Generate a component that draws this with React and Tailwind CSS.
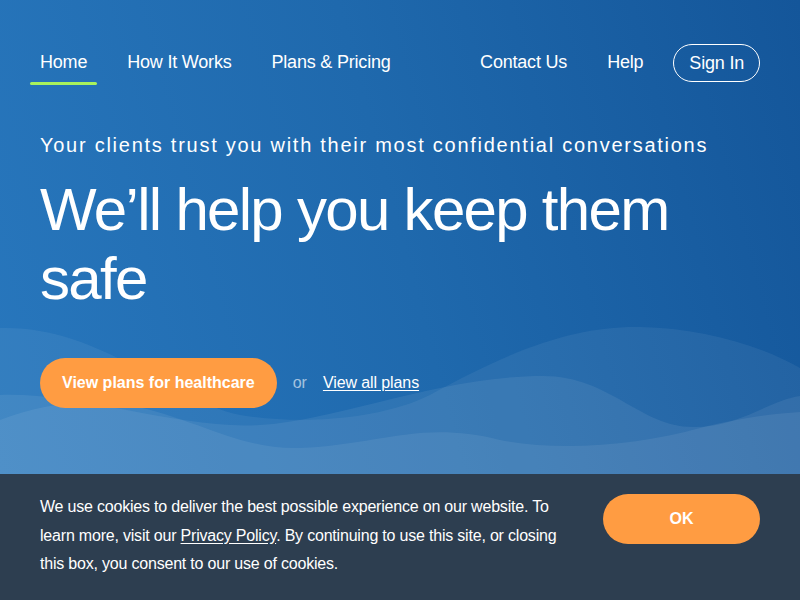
import React from 'react';

const navLeft = ['Home', 'How It Works', 'Plans & Pricing'];
const navRight = ['Contact Us', 'Help'];

const Waves = () => (
    <svg
        className="absolute inset-0 w-full h-full pointer-events-none"
        viewBox="0 0 800 474"
        preserveAspectRatio="none"
    >
        <path
            d="M0,328 C100,325 170,400 240,415 C300,425 380,420 430,395 C520,345 580,326 640,327 C700,328 760,345 800,368 L800,474 L0,474 Z"
            fill="#ffffff"
            fillOpacity="0.06"
        />
        <path
            d="M0,395 C80,392 180,430 260,425 C340,420 440,376 543,376 C610,376 640,427 693,427 C740,427 770,400 800,396 L800,474 L0,474 Z"
            fill="#ffffff"
            fillOpacity="0.07"
        />
        <path
            d="M0,420 C40,405 80,398 130,405 C200,420 240,450 300,448 C380,445 420,420 500,440 C560,452 640,445 700,428 C740,418 770,414 800,412 L800,474 L0,474 Z"
            fill="#ffffff"
            fillOpacity="0.07"
        />
    </svg>
);

const App = () => {
    return (
        <div className="w-full h-[600px] flex flex-col font-['Liberation_Sans',Arial,sans-serif] text-white">
            <div className="relative flex-1 overflow-hidden bg-[linear-gradient(75deg,#2877bd_0%,#1f69ad_50%,#14569a_100%)]">
                <Waves />

                <div className="relative">
                    <nav className="flex items-start justify-between pl-[30px] pr-[40px] pt-[44px]">
                        <div className="flex items-start gap-[20px]">
                            {navLeft.map((item, i) => (
                                <div key={item} className="flex flex-col">
                                    <a href="#" className="px-[10px] h-[38px] leading-[37px] text-[18px] tracking-[-0.2px] text-white">
                                        {item}
                                    </a>
                                    {i === 0 && <div className="h-[3px] rounded-full bg-[#a8f25c]" />}
                                </div>
                            ))}
                        </div>
                        <div className="flex items-start gap-[20px]">
                            {navRight.map(item => (
                                <a key={item} href="#" className="px-[10px] h-[38px] leading-[37px] text-[18px] tracking-[-0.2px] text-white">
                                    {item}
                                </a>
                            ))}
                            <button className="h-[38px] px-[15px] rounded-full border border-white text-[18px] tracking-[-0.2px] leading-[36px] text-white">
                                Sign In
                            </button>
                        </div>
                    </nav>

                    <div className="px-[40px] pt-[46px]">
                        <p className="text-[20px] leading-[28px] tracking-[1.74px]">
                            Your clients trust you with their most confidential conversations
                        </p>
                        <h1 className="mt-[16px] text-[60px] leading-[69px] font-normal tracking-[-1.7px] max-w-[680px]">
                            We’ll help you keep them safe
                        </h1>
                        <div className="mt-[45px] flex items-center gap-4">
                            <button className="h-[50px] px-[22px] rounded-full bg-[#ff9c42] text-[16px] font-bold text-white">
                                View plans for healthcare
                            </button>
                            <span className="text-[16px] text-white/60">or</span>
                            <a href="#" className="text-[16px] text-white underline underline-offset-2 tracking-[-0.1px]">
                                View all plans
                            </a>
                        </div>
                    </div>
                </div>
            </div>

            <div className="h-[126px] bg-[#2d3e50] flex items-start px-[40px]">
                <p className="w-[530px] pt-[19px] text-[16px] leading-[28.5px] tracking-[-0.2px] text-white">
                    We use cookies to deliver the best possible experience on our website. To learn more, visit our{' '}
                    <a href="#" className="underline underline-offset-2">Privacy Policy</a>. By continuing to use this site, or closing this box, you consent to our use of cookies.
                </p>
                <button className="ml-auto mt-[20px] w-[157px] h-[50px] rounded-full bg-[#ff9c42] text-[16px] font-bold text-white">
                    OK
                </button>
            </div>
        </div>
    );
};

export default App;
